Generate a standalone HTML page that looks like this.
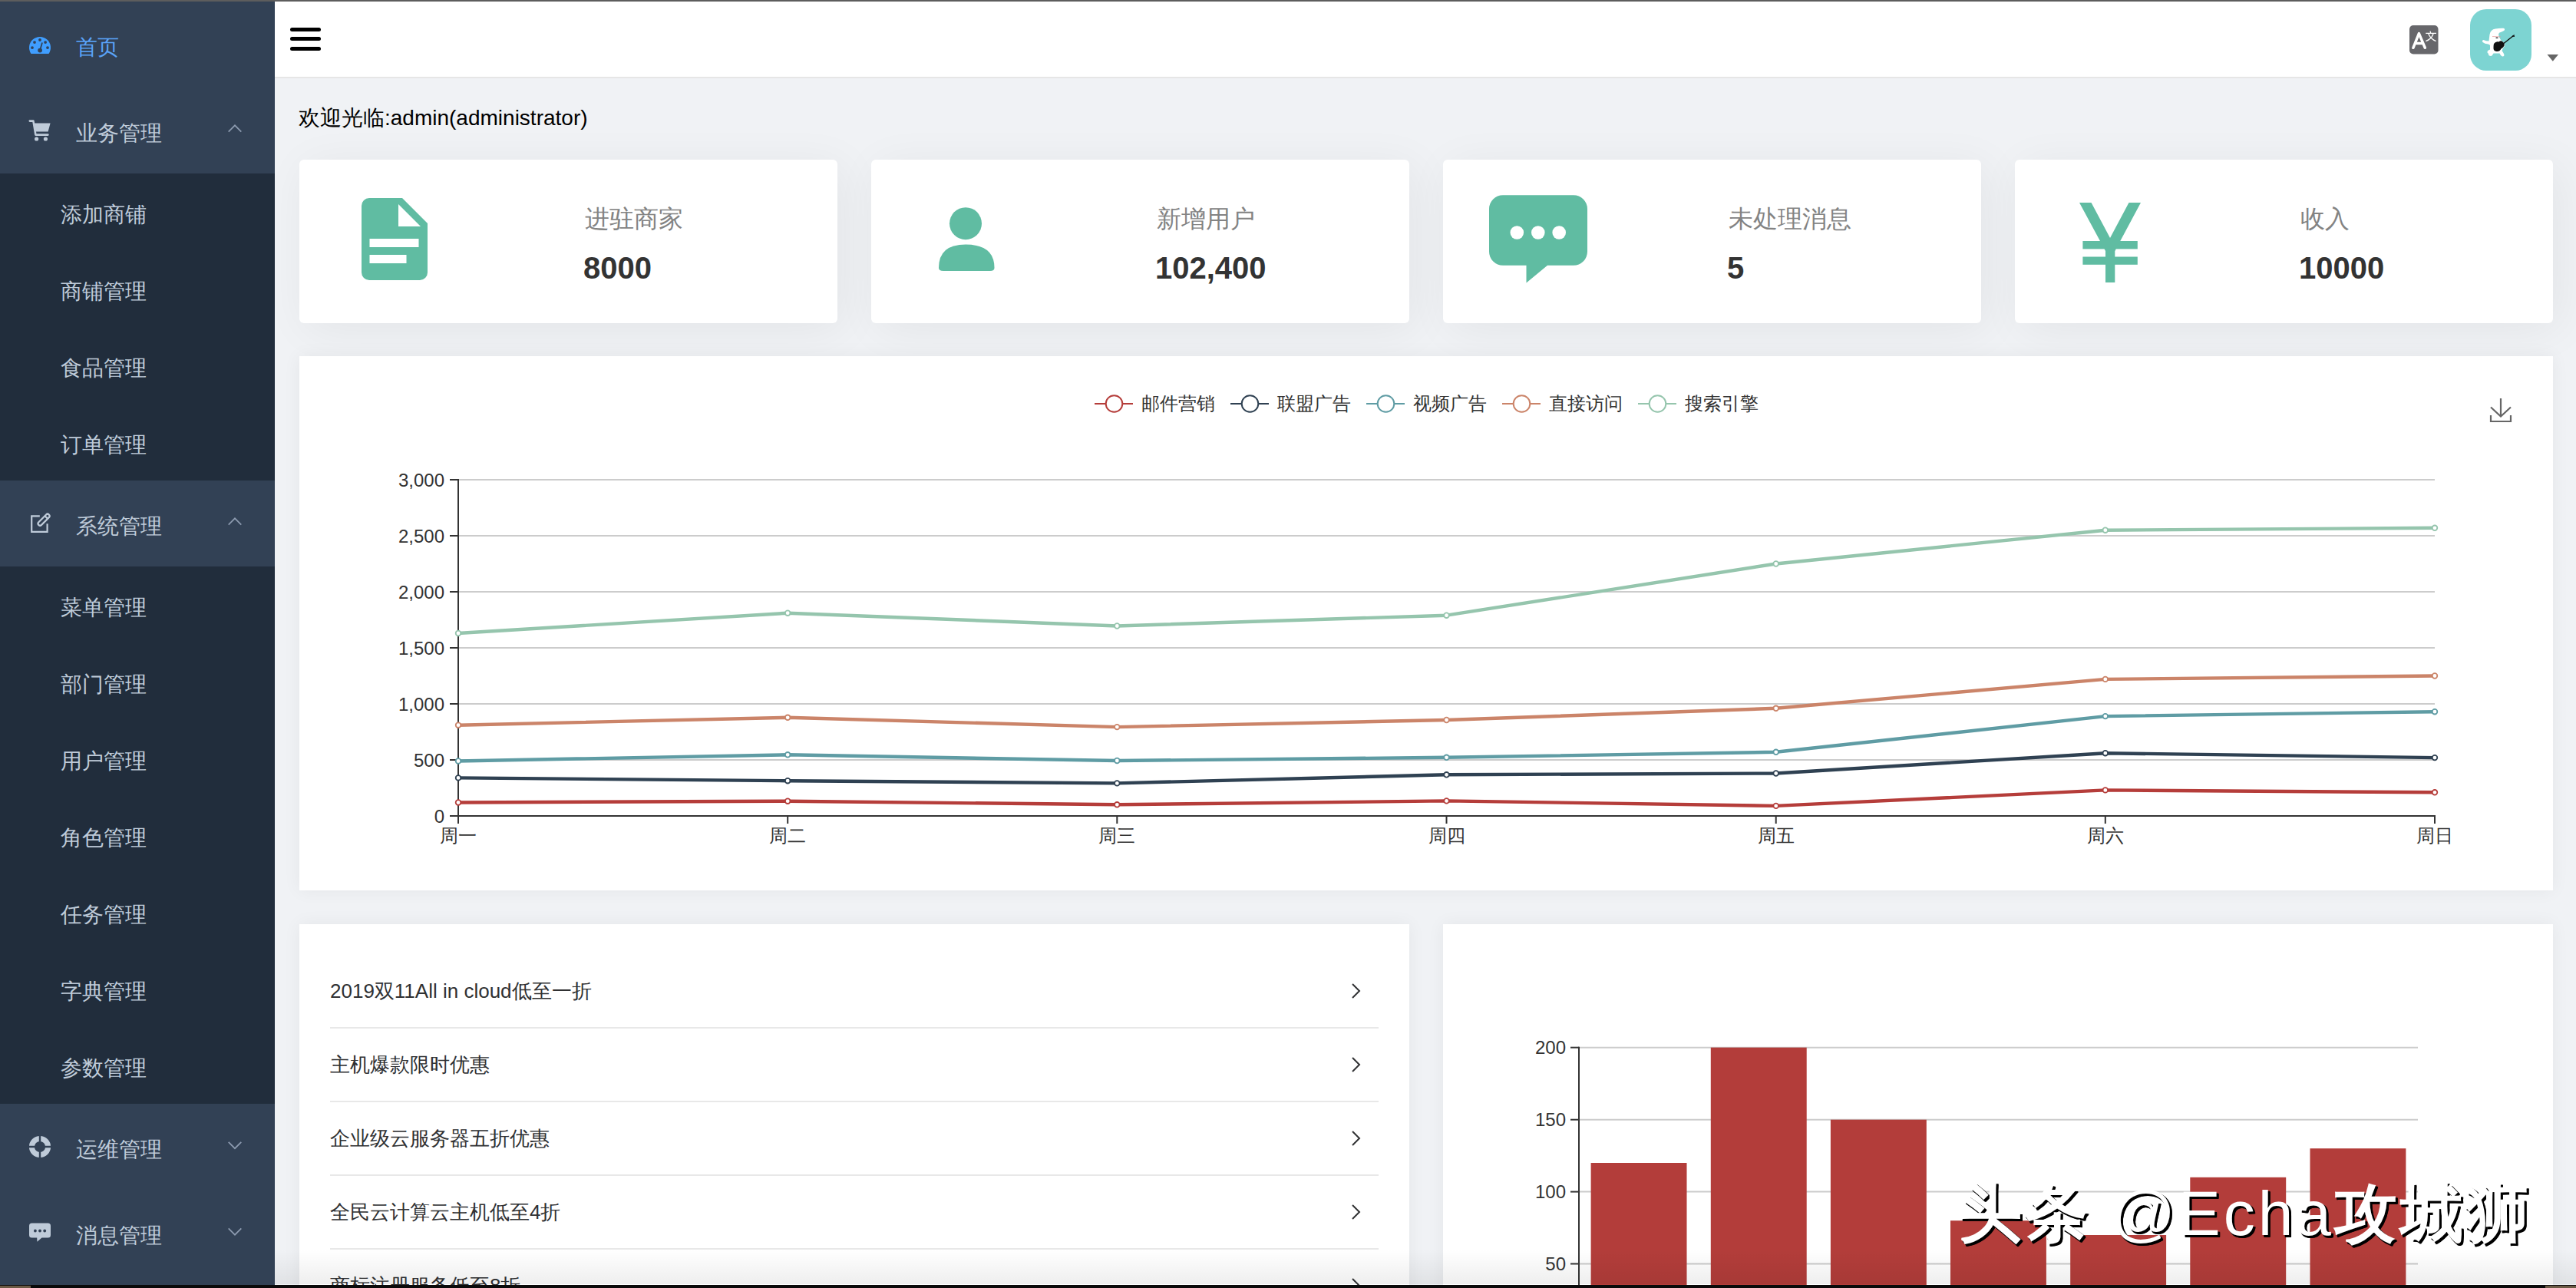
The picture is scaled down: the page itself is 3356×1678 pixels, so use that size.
<!DOCTYPE html>
<html><head><meta charset="utf-8"><title>dashboard</title>
<style>
html,body{margin:0;padding:0;}
body{width:3356px;height:1678px;overflow:hidden;position:relative;background:#f0f2f5;font-family:"Liberation Sans", sans-serif;}
.r{position:absolute;}
.t{position:absolute;white-space:nowrap;}
.card{position:absolute;background:#fff;box-shadow:8px 8px 60px rgba(0,0,0,0.06);}
.card2{position:absolute;background:#fff;box-shadow:0 0 22px rgba(0,0,0,0.055);}
.ov{position:absolute;left:0;top:0;}
</style></head><body>
<div class="r" style="left:0;top:0;width:358px;height:1678px;background:#324155"></div><div class="r" style="left:0;top:226px;width:358px;height:400px;background:#212d3c"></div><div class="r" style="left:0;top:738px;width:358px;height:700px;background:#212d3c"></div>
<div class="t" style="left:99px;top:41.0px;line-height:42.0px;font-size:28px;color:#5aa3f8;font-weight:normal;">首页</div><div class="t" style="left:99px;top:153.0px;line-height:42.0px;font-size:28px;color:#bfcbd9;font-weight:normal;">业务管理</div><div class="t" style="left:99px;top:665.0px;line-height:42.0px;font-size:28px;color:#bfcbd9;font-weight:normal;">系统管理</div><div class="t" style="left:99px;top:1477.0px;line-height:42.0px;font-size:28px;color:#bfcbd9;font-weight:normal;">运维管理</div><div class="t" style="left:99px;top:1589.0px;line-height:42.0px;font-size:28px;color:#bfcbd9;font-weight:normal;">消息管理</div><div class="t" style="left:79px;top:259.0px;line-height:42.0px;font-size:28px;color:#bfcbd9;font-weight:normal;">添加商铺</div><div class="t" style="left:79px;top:359.0px;line-height:42.0px;font-size:28px;color:#bfcbd9;font-weight:normal;">商铺管理</div><div class="t" style="left:79px;top:459.0px;line-height:42.0px;font-size:28px;color:#bfcbd9;font-weight:normal;">食品管理</div><div class="t" style="left:79px;top:559.0px;line-height:42.0px;font-size:28px;color:#bfcbd9;font-weight:normal;">订单管理</div><div class="t" style="left:79px;top:771.0px;line-height:42.0px;font-size:28px;color:#bfcbd9;font-weight:normal;">菜单管理</div><div class="t" style="left:79px;top:871.0px;line-height:42.0px;font-size:28px;color:#bfcbd9;font-weight:normal;">部门管理</div><div class="t" style="left:79px;top:971.0px;line-height:42.0px;font-size:28px;color:#bfcbd9;font-weight:normal;">用户管理</div><div class="t" style="left:79px;top:1071.0px;line-height:42.0px;font-size:28px;color:#bfcbd9;font-weight:normal;">角色管理</div><div class="t" style="left:79px;top:1171.0px;line-height:42.0px;font-size:28px;color:#bfcbd9;font-weight:normal;">任务管理</div><div class="t" style="left:79px;top:1271.0px;line-height:42.0px;font-size:28px;color:#bfcbd9;font-weight:normal;">字典管理</div><div class="t" style="left:79px;top:1371.0px;line-height:42.0px;font-size:28px;color:#bfcbd9;font-weight:normal;">参数管理</div><div class="r" style="left:358px;top:0;width:2998px;height:100px;background:#fff;border-bottom:2px solid #e6e6e6;box-sizing:content-box"></div><div class="r" style="left:0;top:0;width:3356px;height:2px;background:#5d5d5d"></div><div class="r" style="left:378px;top:35.9px;width:40px;height:5.2px;border-radius:3px;background:#000"></div><div class="r" style="left:378px;top:48.2px;width:40px;height:5.2px;border-radius:3px;background:#000"></div><div class="r" style="left:378px;top:60.5px;width:40px;height:5.2px;border-radius:3px;background:#000"></div><div class="t" style="left:389px;top:133.0px;line-height:42.0px;font-size:28px;color:#000;font-weight:normal;">欢迎光临:admin(administrator)</div><div class="card" style="left:390px;top:208px;width:701px;height:213px;border-radius:6px"></div><div class="t" style="left:762px;top:261.0px;line-height:48.0px;font-size:32px;color:#838383;font-weight:normal;">进驻商家</div><div class="t" style="left:760px;top:319.0px;line-height:60.0px;font-size:40px;color:#333;font-weight:bold;">8000</div><div class="card" style="left:1135px;top:208px;width:701px;height:213px;border-radius:6px"></div><div class="t" style="left:1507px;top:261.0px;line-height:48.0px;font-size:32px;color:#838383;font-weight:normal;">新增用户</div><div class="t" style="left:1505px;top:319.0px;line-height:60.0px;font-size:40px;color:#333;font-weight:bold;">102,400</div><div class="card" style="left:1880px;top:208px;width:701px;height:213px;border-radius:6px"></div><div class="t" style="left:2252px;top:261.0px;line-height:48.0px;font-size:32px;color:#838383;font-weight:normal;">未处理消息</div><div class="t" style="left:2250px;top:319.0px;line-height:60.0px;font-size:40px;color:#333;font-weight:bold;">5</div><div class="card" style="left:2625px;top:208px;width:701px;height:213px;border-radius:6px"></div><div class="t" style="left:2997px;top:261.0px;line-height:48.0px;font-size:32px;color:#838383;font-weight:normal;">收入</div><div class="t" style="left:2995px;top:319.0px;line-height:60.0px;font-size:40px;color:#333;font-weight:bold;">10000</div><div class="card2" style="left:390px;top:464px;width:2936px;height:696px"></div><div class="t" style="left:1487px;top:508.0px;line-height:36.0px;font-size:24px;color:#333;font-weight:normal;">邮件营销</div><div class="t" style="left:1664px;top:508.0px;line-height:36.0px;font-size:24px;color:#333;font-weight:normal;">联盟广告</div><div class="t" style="left:1841px;top:508.0px;line-height:36.0px;font-size:24px;color:#333;font-weight:normal;">视频广告</div><div class="t" style="left:2018px;top:508.0px;line-height:36.0px;font-size:24px;color:#333;font-weight:normal;">直接访问</div><div class="t" style="left:2195px;top:508.0px;line-height:36.0px;font-size:24px;color:#333;font-weight:normal;">搜索引擎</div><div class="card2" style="left:390px;top:1204px;width:1446px;height:600px"></div><div class="t" style="left:430px;top:1271.5px;line-height:39.0px;font-size:26px;color:#303133;font-weight:500;">2019双11All in cloud低至一折</div><div class="r" style="left:430px;top:1338px;width:1366px;height:2px;background:#e8e8e8"></div><div class="t" style="left:430px;top:1367.5px;line-height:39.0px;font-size:26px;color:#303133;font-weight:500;">主机爆款限时优惠</div><div class="r" style="left:430px;top:1434px;width:1366px;height:2px;background:#e8e8e8"></div><div class="t" style="left:430px;top:1463.5px;line-height:39.0px;font-size:26px;color:#303133;font-weight:500;">企业级云服务器五折优惠</div><div class="r" style="left:430px;top:1530px;width:1366px;height:2px;background:#e8e8e8"></div><div class="t" style="left:430px;top:1559.5px;line-height:39.0px;font-size:26px;color:#303133;font-weight:500;">全民云计算云主机低至4折</div><div class="r" style="left:430px;top:1626px;width:1366px;height:2px;background:#e8e8e8"></div><div class="t" style="left:430px;top:1655.5px;line-height:39.0px;font-size:26px;color:#303133;font-weight:500;">商标注册服务低至8折</div><div class="r" style="left:430px;top:1722px;width:1366px;height:2px;background:#e8e8e8"></div><div class="card2" style="left:1880px;top:1204px;width:1446px;height:600px"></div>
<svg class="ov" width="3356" height="1678" viewBox="0 0 3356 1678" font-family="Liberation Sans, sans-serif"><path d="M297.7,171.7 L306,163.3 L314.3,171.7" fill="none" stroke="#8d9bb0" stroke-width="1.7"/><path d="M297.7,683.7 L306,675.3 L314.3,683.7" fill="none" stroke="#8d9bb0" stroke-width="1.7"/><path d="M297.7,1487.8 L306,1496.2 L314.3,1487.8" fill="none" stroke="#8d9bb0" stroke-width="1.7"/><path d="M297.7,1600.3 L306,1608.7 L314.3,1600.3" fill="none" stroke="#8d9bb0" stroke-width="1.7"/><g transform="translate(38,48)">
<path d="M2.5,22 A14,14 0 1 1 25.5,22 Z" fill="#409eff"/>
<g fill="#324155"><circle cx="14" cy="4" r="1.9"/><circle cx="7" cy="7.1" r="1.9"/><circle cx="21.1" cy="7.1" r="1.9"/><circle cx="4" cy="14.1" r="1.9"/><circle cx="24" cy="14.1" r="1.9"/>
<circle cx="14.1" cy="17.6" r="2.9"/><path d="M14.1,17.6 L16.8,8.2" stroke="#324155" stroke-width="1.8" stroke-linecap="round"/></g>
</g><g transform="translate(38,156)" fill="#bfcbd9" stroke="#bfcbd9">
<path d="M0.8,1.6 L5.4,1.6 L8.4,19.6 L24.4,19.6" fill="none" stroke-width="2.6" stroke-linecap="round" stroke-linejoin="round"/>
<path d="M6.4,4.6 L27.6,4.6 L24.6,15.4 L8.3,15.4 Z" stroke="none"/>
<circle cx="9.6" cy="25" r="2.6" stroke="none"/><circle cx="21.4" cy="25" r="2.6" stroke="none"/>
</g><g transform="translate(40,668)" fill="none" stroke="#bfcbd9" stroke-width="2.2">
<path d="M11.8,4.4 L1.2,4.4 L1.2,24.8 L21.6,24.8 L21.6,14.2"/>
<g transform="translate(16,10.2) rotate(45)"><rect x="-2.6" y="-11" width="5.2" height="19" rx="2.6"/><path d="M-2.6,-6 L2.6,-6"/></g>
</g><g transform="translate(52,1494)">
<circle r="10.6" fill="none" stroke="#bfcbd9" stroke-width="7"/>
<path d="M0,-15 V15 M-15,0 H15" stroke="#324155" stroke-width="2.4"/>
</g><g transform="translate(38,1593)">
<path d="M3.5,0.5 H24.5 A3.5,3.5 0 0 1 28,4 V15.9 A3.5,3.5 0 0 1 24.5,19.4 H16.5 L10.4,24.8 L10.2,19.4 H3.5 A3.5,3.5 0 0 1 0,15.9 V4 A3.5,3.5 0 0 1 3.5,0.5 Z" fill="#bfcbd9"/>
<g fill="#324155"><circle cx="7.9" cy="10.5" r="1.9"/><circle cx="14" cy="10.5" r="1.9"/><circle cx="20.2" cy="10.5" r="1.9"/></g>
</g><g transform="translate(3139,33)">
<rect width="37.5" height="37.5" rx="5" fill="#67676b"/>
<path d="M4.9,29.3 L12.4,10.6 L20.3,29.3 M8.2,23.6 L17.3,23.6" fill="none" stroke="#fff" stroke-width="3.5" stroke-linejoin="round" stroke-linecap="round"/>
<g fill="none" stroke="#fff" stroke-width="1.3"><path d="M21.3,10.4 H35 M27,7.6 L27.8,10.4 M24.7,10.8 Q27.5,18 34.6,20.6 M31.1,10.8 Q29,18 21.3,20.6"/></g>
</g><g transform="translate(3218,12)">
<rect width="80" height="80" rx="21" fill="#7dd4d2"/>
<path d="M25.5,33 Q26.5,26.5 33,25.5 Q39,24.5 43.5,24.8 Q46,25.5 44.5,27.8 Q42,29.5 38,30.8 Q36.5,32 37.5,35.5 L40,40 Q42,42 44,43.5 Q46.5,46 44.5,48.5 Q42.5,51 41.5,54 Q44,57.5 44.5,59.5 Q44.5,62 42,61.5 Q39.5,60.5 38.5,57.5 L30.5,57.5 Q29,60.5 27.5,61 Q23.5,61 24,58 Q22,57 22.5,55 Q23.5,53 26,52.5 L26,47 Q25,45.5 23.5,45.5 Q19,45 16.5,43 Q15,40.5 17.5,40 Q21,41.5 24.5,41.5 Q25,37 25.5,33 Z" fill="#fff"/>
<path d="M31,45 Q33.5,41.5 37.5,42.5 Q40,40.5 42,42 Q45.5,44.5 44.5,47.5 Q43,50.5 40.5,51.5 Q38.5,55.5 34.5,55 Q30,54.5 30.5,49.5 Q30.5,47 31,45 Z" fill="#111"/>
<path d="M42,46 L56.5,34.5" stroke="#111" stroke-width="1.4"/>
<path d="M54,35.5 L57.5,33 L58,36 Z" fill="#111"/>
<path d="M33,37 Q35,35.8 37,37 Q35,39 33,37 Z" fill="#111"/>
<path d="M29,35.5 L40,35.8" stroke="#e59a9a" stroke-width="0.7"/>
</g><path d="M3318.5,71 L3333,71 L3325.8,79.8 Z" fill="#666"/><g transform="translate(471,258)">
<path d="M10,0 H53 L86,33 V97 A10,10 0 0 1 76,107 H10 A10,10 0 0 1 0,97 V10 A10,10 0 0 1 10,0 Z" fill="#60bca2"/>
<path d="M48,8 L48,37 L77,37 Z" fill="#fff"/>
<rect x="10.5" y="53" width="64" height="11" fill="#fff"/>
<rect x="10.5" y="74" width="48" height="11" fill="#fff"/>
</g><g>
<circle cx="1258" cy="291.2" r="21" fill="#60bca2"/>
<path d="M1223,349 Q1223,318.6 1258,318.6 Q1295.5,318.6 1295.5,349 Q1295.5,353 1290,353 H1229 Q1223,353 1223,349 Z" fill="#60bca2"/>
</g><g>
<path d="M1958,254.2 H2050 A18,18 0 0 1 2068,272.2 V327.8 A18,18 0 0 1 2050,345.8 H2016 L1988.5,368.5 V345.8 H1958 A18,18 0 0 1 1940,327.8 V272.2 A18,18 0 0 1 1958,254.2 Z" fill="#60bca2"/>
<circle cx="1976.3" cy="303" r="8.8" fill="#fff"/><circle cx="2003.8" cy="303" r="8.8" fill="#fff"/><circle cx="2031.2" cy="303" r="8.8" fill="#fff"/>
</g><g fill="#60bca2">
<path d="M2709,264 H2724.5 L2749,310 L2773.5,264 H2789 L2755.3,327 H2743 Z"/>
<rect x="2713.4" y="314" width="71.4" height="10.4"/>
<rect x="2713.4" y="334.5" width="71.4" height="10.3"/>
<rect x="2743" y="314" width="12.3" height="54"/>
</g><path d="M1762,1282 L1771,1291 L1762,1300" fill="none" stroke="#303133" stroke-width="2"/><path d="M1762,1378 L1771,1387 L1762,1396" fill="none" stroke="#303133" stroke-width="2"/><path d="M1762,1474 L1771,1483 L1762,1492" fill="none" stroke="#303133" stroke-width="2"/><path d="M1762,1570 L1771,1579 L1762,1588" fill="none" stroke="#303133" stroke-width="2"/><path d="M1762,1666 L1771,1675 L1762,1684" fill="none" stroke="#303133" stroke-width="2"/><path d="M1426,526 H1476" stroke="#b53d3a" stroke-width="2.2"/><circle cx="1451.5" cy="526" r="10.8" fill="#fff" stroke="#b53d3a" stroke-width="2"/><path d="M1603,526 H1653" stroke="#2f4152" stroke-width="2.2"/><circle cx="1628.5" cy="526" r="10.8" fill="#fff" stroke="#2f4152" stroke-width="2"/><path d="M1780,526 H1830" stroke="#5f9ca4" stroke-width="2.2"/><circle cx="1805.5" cy="526" r="10.8" fill="#fff" stroke="#5f9ca4" stroke-width="2"/><path d="M1957,526 H2007" stroke="#cb8469" stroke-width="2.2"/><circle cx="1982.5" cy="526" r="10.8" fill="#fff" stroke="#cb8469" stroke-width="2"/><path d="M2134,526 H2184" stroke="#95c5ad" stroke-width="2.2"/><circle cx="2159.5" cy="526" r="10.8" fill="#fff" stroke="#95c5ad" stroke-width="2"/><g fill="none" stroke="#666" stroke-width="2.2"><path d="M3258,519 V542 M3245,530.5 L3258,542.5 L3271,530.5 M3245,541 V549 H3271 V541"/></g><path d="M597,990.0 H3172" stroke="#cccccc" stroke-width="2"/><path d="M597,917.0 H3172" stroke="#cccccc" stroke-width="2"/><path d="M597,844.0 H3172" stroke="#cccccc" stroke-width="2"/><path d="M597,771.0 H3172" stroke="#cccccc" stroke-width="2"/><path d="M597,698.0 H3172" stroke="#cccccc" stroke-width="2"/><path d="M597,625.0 H3172" stroke="#cccccc" stroke-width="2"/><path d="M586,1063.0 H597" stroke="#333" stroke-width="2"/><text x="579" y="1071.5" text-anchor="end" font-size="24" fill="#333">0</text><path d="M586,990.0 H597" stroke="#333" stroke-width="2"/><text x="579" y="998.5" text-anchor="end" font-size="24" fill="#333">500</text><path d="M586,917.0 H597" stroke="#333" stroke-width="2"/><text x="579" y="925.5" text-anchor="end" font-size="24" fill="#333">1,000</text><path d="M586,844.0 H597" stroke="#333" stroke-width="2"/><text x="579" y="852.5" text-anchor="end" font-size="24" fill="#333">1,500</text><path d="M586,771.0 H597" stroke="#333" stroke-width="2"/><text x="579" y="779.5" text-anchor="end" font-size="24" fill="#333">2,000</text><path d="M586,698.0 H597" stroke="#333" stroke-width="2"/><text x="579" y="706.5" text-anchor="end" font-size="24" fill="#333">2,500</text><path d="M586,625.0 H597" stroke="#333" stroke-width="2"/><text x="579" y="633.5" text-anchor="end" font-size="24" fill="#333">3,000</text><path d="M597,624.0 V1063" stroke="#333" stroke-width="2"/><path d="M597,1063 H3173" stroke="#333" stroke-width="2"/><path d="M597.0,1063 V1073" stroke="#333" stroke-width="2"/><text x="597.0" y="1097" text-anchor="middle" font-size="24" fill="#333">周一</text><path d="M1026.2,1063 V1073" stroke="#333" stroke-width="2"/><text x="1026.2" y="1097" text-anchor="middle" font-size="24" fill="#333">周二</text><path d="M1455.3,1063 V1073" stroke="#333" stroke-width="2"/><text x="1455.3" y="1097" text-anchor="middle" font-size="24" fill="#333">周三</text><path d="M1884.5,1063 V1073" stroke="#333" stroke-width="2"/><text x="1884.5" y="1097" text-anchor="middle" font-size="24" fill="#333">周四</text><path d="M2313.7,1063 V1073" stroke="#333" stroke-width="2"/><text x="2313.7" y="1097" text-anchor="middle" font-size="24" fill="#333">周五</text><path d="M2742.8,1063 V1073" stroke="#333" stroke-width="2"/><text x="2742.8" y="1097" text-anchor="middle" font-size="24" fill="#333">周六</text><path d="M3172.0,1063 V1073" stroke="#333" stroke-width="2"/><text x="3172.0" y="1097" text-anchor="middle" font-size="24" fill="#333">周日</text><polyline points="597.0,1045.5 1026.2,1043.7 1455.3,1048.3 1884.5,1043.4 2313.7,1049.9 2742.8,1029.4 3172.0,1032.3" fill="none" stroke="#b53d3a" stroke-width="4.4" stroke-linejoin="round"/><polyline points="597.0,1013.4 1026.2,1017.2 1455.3,1020.4 1884.5,1009.3 2313.7,1007.5 2742.8,981.2 3172.0,987.1" fill="none" stroke="#2f4152" stroke-width="4.4" stroke-linejoin="round"/><polyline points="597.0,991.5 1026.2,983.3 1455.3,991.0 1884.5,986.8 2313.7,979.8 2742.8,933.1 3172.0,927.2" fill="none" stroke="#5f9ca4" stroke-width="4.4" stroke-linejoin="round"/><polyline points="597.0,944.7 1026.2,934.8 1455.3,947.1 1884.5,938.0 2313.7,922.8 2742.8,884.9 3172.0,880.5" fill="none" stroke="#cb8469" stroke-width="4.4" stroke-linejoin="round"/><polyline points="597.0,825.0 1026.2,798.7 1455.3,815.5 1884.5,801.7 2313.7,734.5 2742.8,690.7 3172.0,687.8" fill="none" stroke="#95c5ad" stroke-width="4.4" stroke-linejoin="round"/><circle cx="597.0" cy="1045.5" r="3.3" fill="#fff" stroke="#b53d3a" stroke-width="1.8"/><circle cx="1026.2" cy="1043.7" r="3.3" fill="#fff" stroke="#b53d3a" stroke-width="1.8"/><circle cx="1455.3" cy="1048.3" r="3.3" fill="#fff" stroke="#b53d3a" stroke-width="1.8"/><circle cx="1884.5" cy="1043.4" r="3.3" fill="#fff" stroke="#b53d3a" stroke-width="1.8"/><circle cx="2313.7" cy="1049.9" r="3.3" fill="#fff" stroke="#b53d3a" stroke-width="1.8"/><circle cx="2742.8" cy="1029.4" r="3.3" fill="#fff" stroke="#b53d3a" stroke-width="1.8"/><circle cx="3172.0" cy="1032.3" r="3.3" fill="#fff" stroke="#b53d3a" stroke-width="1.8"/><circle cx="597.0" cy="1013.4" r="3.3" fill="#fff" stroke="#2f4152" stroke-width="1.8"/><circle cx="1026.2" cy="1017.2" r="3.3" fill="#fff" stroke="#2f4152" stroke-width="1.8"/><circle cx="1455.3" cy="1020.4" r="3.3" fill="#fff" stroke="#2f4152" stroke-width="1.8"/><circle cx="1884.5" cy="1009.3" r="3.3" fill="#fff" stroke="#2f4152" stroke-width="1.8"/><circle cx="2313.7" cy="1007.5" r="3.3" fill="#fff" stroke="#2f4152" stroke-width="1.8"/><circle cx="2742.8" cy="981.2" r="3.3" fill="#fff" stroke="#2f4152" stroke-width="1.8"/><circle cx="3172.0" cy="987.1" r="3.3" fill="#fff" stroke="#2f4152" stroke-width="1.8"/><circle cx="597.0" cy="991.5" r="3.3" fill="#fff" stroke="#5f9ca4" stroke-width="1.8"/><circle cx="1026.2" cy="983.3" r="3.3" fill="#fff" stroke="#5f9ca4" stroke-width="1.8"/><circle cx="1455.3" cy="991.0" r="3.3" fill="#fff" stroke="#5f9ca4" stroke-width="1.8"/><circle cx="1884.5" cy="986.8" r="3.3" fill="#fff" stroke="#5f9ca4" stroke-width="1.8"/><circle cx="2313.7" cy="979.8" r="3.3" fill="#fff" stroke="#5f9ca4" stroke-width="1.8"/><circle cx="2742.8" cy="933.1" r="3.3" fill="#fff" stroke="#5f9ca4" stroke-width="1.8"/><circle cx="3172.0" cy="927.2" r="3.3" fill="#fff" stroke="#5f9ca4" stroke-width="1.8"/><circle cx="597.0" cy="944.7" r="3.3" fill="#fff" stroke="#cb8469" stroke-width="1.8"/><circle cx="1026.2" cy="934.8" r="3.3" fill="#fff" stroke="#cb8469" stroke-width="1.8"/><circle cx="1455.3" cy="947.1" r="3.3" fill="#fff" stroke="#cb8469" stroke-width="1.8"/><circle cx="1884.5" cy="938.0" r="3.3" fill="#fff" stroke="#cb8469" stroke-width="1.8"/><circle cx="2313.7" cy="922.8" r="3.3" fill="#fff" stroke="#cb8469" stroke-width="1.8"/><circle cx="2742.8" cy="884.9" r="3.3" fill="#fff" stroke="#cb8469" stroke-width="1.8"/><circle cx="3172.0" cy="880.5" r="3.3" fill="#fff" stroke="#cb8469" stroke-width="1.8"/><circle cx="597.0" cy="825.0" r="3.3" fill="#fff" stroke="#95c5ad" stroke-width="1.8"/><circle cx="1026.2" cy="798.7" r="3.3" fill="#fff" stroke="#95c5ad" stroke-width="1.8"/><circle cx="1455.3" cy="815.5" r="3.3" fill="#fff" stroke="#95c5ad" stroke-width="1.8"/><circle cx="1884.5" cy="801.7" r="3.3" fill="#fff" stroke="#95c5ad" stroke-width="1.8"/><circle cx="2313.7" cy="734.5" r="3.3" fill="#fff" stroke="#95c5ad" stroke-width="1.8"/><circle cx="2742.8" cy="690.7" r="3.3" fill="#fff" stroke="#95c5ad" stroke-width="1.8"/><circle cx="3172.0" cy="687.8" r="3.3" fill="#fff" stroke="#95c5ad" stroke-width="1.8"/><path d="M2057,1646.5 H3150" stroke="#cccccc" stroke-width="2"/><path d="M2046,1646.5 H2057" stroke="#333" stroke-width="2"/><text x="2040" y="1655.0" text-anchor="end" font-size="24" fill="#333">50</text><path d="M2057,1552.6 H3150" stroke="#cccccc" stroke-width="2"/><path d="M2046,1552.6 H2057" stroke="#333" stroke-width="2"/><text x="2040" y="1561.1" text-anchor="end" font-size="24" fill="#333">100</text><path d="M2057,1458.7 H3150" stroke="#cccccc" stroke-width="2"/><path d="M2046,1458.7 H2057" stroke="#333" stroke-width="2"/><text x="2040" y="1467.2" text-anchor="end" font-size="24" fill="#333">150</text><path d="M2057,1364.7 H3150" stroke="#cccccc" stroke-width="2"/><path d="M2046,1364.7 H2057" stroke="#333" stroke-width="2"/><text x="2040" y="1373.2" text-anchor="end" font-size="24" fill="#333">200</text><path d="M2057,1363.7 V1678" stroke="#333" stroke-width="2"/><rect x="2072.6" y="1515.0" width="124.9" height="163.0" fill="#b33d3a"/><rect x="2228.8" y="1364.7" width="124.9" height="313.3" fill="#b33d3a"/><rect x="2384.9" y="1458.7" width="124.9" height="219.3" fill="#b33d3a"/><rect x="2541.0" y="1590.2" width="124.9" height="87.8" fill="#b33d3a"/><rect x="2697.2" y="1609.0" width="124.9" height="69.0" fill="#b33d3a"/><rect x="2853.3" y="1533.8" width="124.9" height="144.2" fill="#b33d3a"/><rect x="3009.5" y="1496.2" width="124.9" height="181.8" fill="#b33d3a"/></svg>
<div class="t" style="left:2552px;top:1526px;font-size:82px;line-height:110px;font-weight:500;color:#fff;text-shadow:3px 3px 0 #000,2px 2px 0 #000,3px 2px 0 #000,2px 3px 0 #000;letter-spacing:4px"><b style="font-weight:700">头条</b> @Echa<b style="font-weight:700">攻城狮</b></div>
<div class="r" style="left:358px;top:1628px;width:2998px;height:45px;background:linear-gradient(rgba(0,0,0,0),rgba(0,0,0,0.065))"></div><div class="r" style="left:0;top:1674px;width:3356px;height:4px;background:#0a0a0a"></div><div class="r" style="left:0;top:1675px;width:40px;height:3px;background:#6b5a45"></div><div class="r" style="left:3316px;top:1675px;width:40px;height:3px;background:#6b5a45"></div>
</body></html>
